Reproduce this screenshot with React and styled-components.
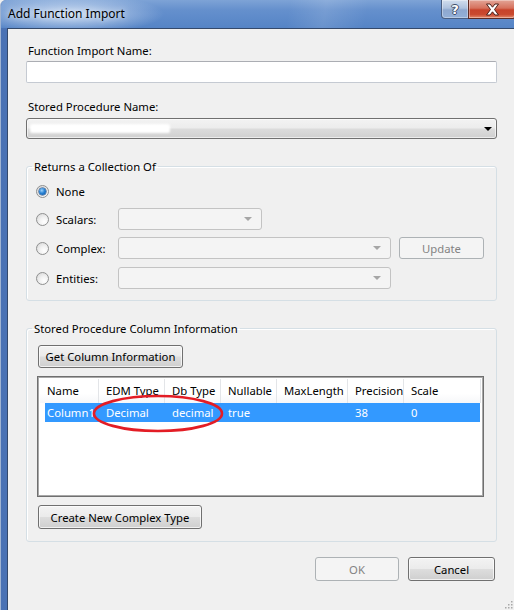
import React from 'react';
import styled, { createGlobalStyle } from 'styled-components';

const Global = createGlobalStyle`
  html, body { margin: 0; padding: 0; background: #f0f0f0; }
  body {
    width: 514px; height: 610px; overflow: hidden;
    font-family: "Noto Sans", "Open Sans", sans-serif;
    font-size: 11.3px; color: #000;
  }
  * { box-sizing: border-box; }
`;

const Viewport = styled.div`
  width: 514px; height: 610px; overflow: hidden; position: relative;
`;

const Window = styled.div`
  width: 522px; height: 640px;
  display: flex; flex-direction: column;
  background: #4e78b9;
  border-left: 1px solid #9fb3d1;
  border-top-left-radius: 6px;
  overflow: hidden;
`;

const TitleBar = styled.div`
  height: 28px; flex: none;
  display: flex; align-items: flex-start;
  padding-left: 7px; padding-right: 6px;
  background:
    radial-gradient(ellipse 95px 20px at 68px 14px, rgba(225,236,250,0.85), rgba(225,236,250,0) 100%),
    linear-gradient(100deg, rgba(255,255,255,0) 55%, rgba(255,255,255,0.12) 62%, rgba(255,255,255,0) 70%),
    linear-gradient(180deg, #7ea3d6 0%, #6590cd 35%, #5584c6 100%);
`;

const Title = styled.div`
  font-size: 12px; line-height: 28px;
  color: #000;
  text-shadow: 0 0 6px rgba(255,255,255,0.9);
`;

const Caption = styled.div`
  margin-left: auto; display: flex;
`;

const CapButton = styled.div`
  width: ${p => p.$w}px; height: 19px;
  display: flex; align-items: center; justify-content: center;
  border: 1px solid ${p => p.$red ? '#5e2b24' : '#4a5f82'};
  border-top: none;
  border-radius: ${p => p.$first ? '0 0 0 4px' : '0 0 4px 0'};
  margin-left: ${p => p.$first ? 0 : -1}px;
  box-shadow: inset 0 0 0 1px rgba(255,255,255,0.35);
  background: ${p => p.$red
    ? 'linear-gradient(180deg, #e3a597 0%, #d6715d 45%, #c7432b 55%, #c9492f 80%, #e48a6c 100%)'
    : 'linear-gradient(180deg, #d2deee 0%, #aec2de 45%, #8ea8cf 55%, #93b0d8 100%)'};
`;

const HelpGlyph = styled.span`
  font-family: "DejaVu Sans", sans-serif;
  font-weight: bold; font-size: 13px; line-height: 1;
  color: #fff;
  text-shadow: -1px 0 #3f4e68, 1px 0 #3f4e68, 0 -1px #3f4e68, 0 1px #3f4e68;
`;

const Body = styled.div`
  flex: 1; display: flex;
  padding-left: 6px;
  background: linear-gradient(90deg, #4a72b4 0%, #4f79bb 80%, #dbe5f2 85%, #dbe5f2 100%);
`;

const Client = styled.div`
  flex: 1;
  background: #f0f0f0;
  border-top: 1px solid #34496b;
  border-left: 1px solid #34496b;
  padding-left: 18px;
  display: flex; flex-direction: column;
`;

const Content = styled.div`
  width: 471px;
  display: flex; flex-direction: column;
`;

const Label = styled.div`
  line-height: 15px; height: 15px;
  margin-top: ${p => p.$mt}px;
  padding-left: 2px;
  white-space: nowrap;
`;

const TextInput = styled.div`
  margin-top: 3px;
  height: 22px;
  background: #fff;
  border: 1px solid #c5cad2;
  border-top-color: #abadb3;
  border-radius: 2px;
`;

const Combo = styled.div`
  position: relative;
  margin-top: ${p => p.$mt || 0}px;
  width: ${p => p.$w ? `${p.$w}px` : 'auto'};
  height: ${p => p.$h || 22}px;
  flex: none;
  display: flex; align-items: center;
  border: 1px solid ${p => p.$disabled ? '#c3c3c3' : '#707070'};
  border-radius: 3px;
  background: ${p => p.$disabled
    ? '#f4f4f4'
    : 'linear-gradient(180deg, #f3f3f3 0%, #ececec 48%, #dcdcdc 52%, #d0d0d0 100%)'};
  box-shadow: ${p => p.$disabled ? 'none' : 'inset 0 0 0 1px rgba(255,255,255,0.6)'};
`;

const Arrow = styled.span`
  margin-left: auto;
  margin-right: ${p => p.$disabled ? 9 : 4}px;
  width: 0; height: 0;
  border-left: 4px solid transparent;
  border-right: 4px solid transparent;
  border-top: 4px solid ${p => p.$disabled ? '#a6a6a6' : '#000'};
`;

const Redacted = styled.span`
  margin-left: 3px;
  width: 140px; height: 9px;
  background: #fff;
  filter: blur(1.2px);
  border-radius: 2px;
`;

const Group = styled.fieldset`
  margin: ${p => p.$mt}px 0 0 0;
  padding: ${p => p.$pt}px 0 ${p => p.$pb}px ${p => p.$pl}px;
  border: 1px solid #d5dfe5;
  border-radius: 3px;
  box-shadow: inset 1px 1px 0 #fff;
  min-width: 0;
`;

const Legend = styled.legend`
  padding: 0 2px;
  margin-left: ${p => p.$ml}px;
  line-height: 15px;
  white-space: nowrap;
`;

const Options = styled.div`
  display: flex; flex-direction: column; gap: 7px;
`;

const OptionRow = styled.div`
  display: flex; align-items: center;
  height: ${p => p.$h || 22}px;
  margin-bottom: ${p => p.$mb || 0}px;
  margin-top: ${p => p.$mt || 0}px;
`;

const RadioCell = styled.label`
  width: 82px; flex: none;
  display: flex; align-items: center; gap: 7px;
  white-space: nowrap;
`;

const Radio = styled.span`
  width: 13px; height: 13px; flex: none;
  border-radius: 50%;
  border: 1px solid #8e8f8f;
  background: radial-gradient(circle at 65% 70%, #ffffff 0%, #f2f2f2 40%, #d3d3d3 100%);
  display: flex; align-items: center; justify-content: center;
  &::after {
    content: '';
    display: ${p => p.$checked ? 'block' : 'none'};
    width: 7px; height: 7px; border-radius: 50%;
    background: radial-gradient(circle at 40% 35%, #9fd3fb 0%, #2a83d4 45%, #0c4d9b 100%);
    box-shadow: 0 0 0 0.5px #173f72;
  }
`;

const Button = styled.div`
  width: ${p => p.$w}px; height: ${p => p.$h || 23}px;
  flex: none;
  margin-top: ${p => p.$mt || 0}px;
  margin-left: ${p => p.$ml || 0}px;
  display: flex; align-items: center; justify-content: center;
  border: 1px solid ${p => p.$disabled ? '#adb2b5' : '#707070'};
  border-radius: 3px;
  color: ${p => p.$disabled ? '#838383' : '#000'};
  white-space: nowrap;
  background: ${p => p.$disabled
    ? '#f4f4f4'
    : 'linear-gradient(180deg, #f3f3f3 0%, #ebebeb 48%, #dddddd 52%, #cfcfcf 100%)'};
  box-shadow: ${p => p.$disabled ? 'none' : 'inset 0 0 0 1px rgba(255,255,255,0.7)'};
`;

const List = styled.div`
  position: relative;
  margin-top: 8px;
  width: 447px; height: 121px;
  background: #fff;
  border: 1px solid #6f6f6f;
  box-shadow: inset 0 0 0 1px #a8a8a8;
  padding: 2px 2px;
`;

const HeaderRow = styled.div`
  display: flex; height: 24px;
  background: linear-gradient(180deg, #ffffff 0%, #ffffff 60%, #f6f7f9 100%);
`;

const HeaderCell = styled.div`
  width: ${p => p.$w}px; flex: none;
  padding-left: 7px;
  line-height: 23px;
  border-right: 1px solid #e3e5e8;
  white-space: nowrap; overflow: hidden;
`;

const SelectedRow = styled.div`
  display: flex; height: 19px;
  margin: 0 1px 0 5px;
  background: #3399ff;
  color: #fff;
`;

const Cell = styled.div`
  width: ${p => p.$w}px; flex: none;
  padding-left: ${p => p.$pl}px;
  line-height: 19px;
  white-space: nowrap; overflow: hidden;
`;

const Annotation = styled.svg`
  position: absolute;
  left: 54px; top: 17px;
  pointer-events: none;
`;

const Footer = styled.div`
  margin-top: 15px;
  padding-right: 2px;
  display: flex; justify-content: flex-end; gap: 9px;
`;

const Grip = styled.svg`
  position: absolute; right: 1px; bottom: 1px;
`;

const columns = [
  { name: 'Name', w: 59 },
  { name: 'EDM Type', w: 66 },
  { name: 'Db Type', w: 56 },
  { name: 'Nullable', w: 56 },
  { name: 'MaxLength', w: 71 },
  { name: 'Precision', w: 56 },
  { name: 'Scale', w: 77 },
];

const row = ['Column1', 'Decimal', 'decimal', 'true', '', '38', '0'];

export default function App() {
  return (
    <Viewport>
      <Global />
      <Window>
        <TitleBar>
          <Title>Add Function Import</Title>
          <Caption>
            <CapButton $w={28} $first><HelpGlyph>?</HelpGlyph></CapButton>
            <CapButton $w={48} $red>
              <svg width="15" height="13" viewBox="0 0 15 13">
                <path d="M1.5 1 H5 L7.5 4.2 L10 1 H13.5 L9.5 6.5 L13.5 12 H10 L7.5 8.8 L5 12 H1.5 L5.5 6.5 Z"
                  fill="#fff" stroke="#4b1f18" strokeWidth="1" strokeLinejoin="round" />
              </svg>
            </CapButton>
          </Caption>
        </TitleBar>
        <Body>
          <Client>
            <Content>
              <Label $mt={14}>Function Import Name:</Label>
              <TextInput />
              <Label $mt={16}>Stored Procedure Name:</Label>
              <Combo $mt={4} $h={21}>
                <Redacted />
                <Arrow />
              </Combo>

              <Group $mt={20} $pt={8} $pb={11} $pl={9}>
                <Legend $ml={-4}>Returns a Collection Of</Legend>
                <Options>
                  <OptionRow $h={18} $mb={1}>
                    <RadioCell><Radio $checked />None</RadioCell>
                  </OptionRow>
                  <OptionRow>
                    <RadioCell><Radio />Scalars:</RadioCell>
                    <Combo $w={144} $disabled><Arrow $disabled /></Combo>
                  </OptionRow>
                  <OptionRow>
                    <RadioCell><Radio />Complex:</RadioCell>
                    <Combo $w={273} $disabled><Arrow $disabled /></Combo>
                    <Button $w={85} $h={22} $ml={8} $disabled>Update</Button>
                  </OptionRow>
                  <OptionRow $mt={1}>
                    <RadioCell><Radio />Entities:</RadioCell>
                    <Combo $w={273} $disabled><Arrow $disabled /></Combo>
                  </OptionRow>
                </Options>
              </Group>

              <Group $mt={20} $pt={9} $pb={12} $pl={10}>
                <Legend $ml={-5}>Stored Procedure Column Information</Legend>
                <Button $w={145} $ml={1}>Get Column Information</Button>
                <List>
                  <HeaderRow>
                    {columns.map(c => (
                      <HeaderCell key={c.name} $w={c.w}>{c.name}</HeaderCell>
                    ))}
                  </HeaderRow>
                  <SelectedRow>
                    {row.map((v, i) => (
                      <Cell key={i} $w={i === 0 ? columns[i].w - 5 : (i === 6 ? columns[i].w - 1 : columns[i].w)}
                        $pl={i === 0 ? 2 : 7}>{v}</Cell>
                    ))}
                  </SelectedRow>
                  <Annotation width="134" height="40" viewBox="0 0 134 40">
                    <ellipse cx="66" cy="19.5" rx="64" ry="17.5" fill="none" stroke="#e31d25" strokeWidth="2.6" />
                  </Annotation>
                </List>
                <Button $w={164} $h={24} $mt={8} $ml={1}>Create New Complex Type</Button>
              </Group>

              <Footer>
                <Button $w={84} $h={24} $disabled>OK</Button>
                <Button $w={87} $h={24}>Cancel</Button>
              </Footer>
            </Content>
          </Client>
        </Body>
      </Window>
      <Grip width="10" height="10" viewBox="0 0 10 10">
        {[[8, 2], [8, 5], [5, 5], [8, 8], [5, 8], [2, 8]].map(([x, y], i) => (
          <rect key={i} x={x} y={y} width="1.5" height="1.5" fill="#a8a8a8" />
        ))}
      </Grip>
    </Viewport>
  );
}
